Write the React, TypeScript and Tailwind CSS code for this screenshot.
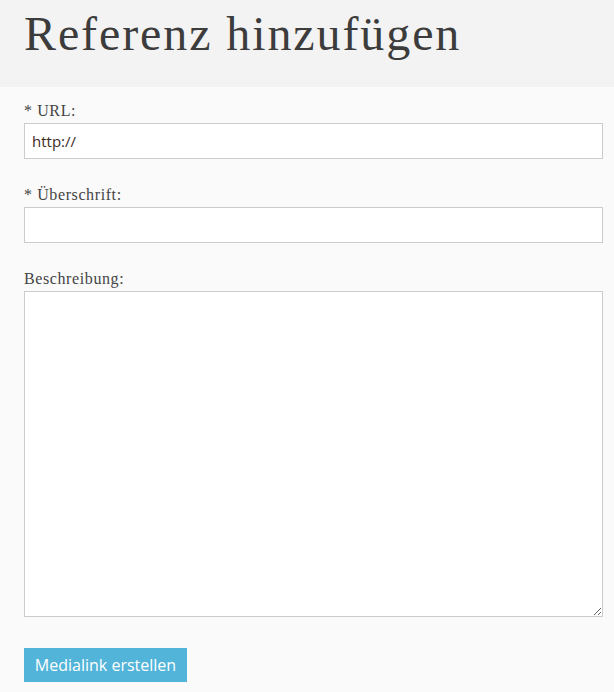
export default function App() {
  return (
    <div className="min-h-[692px] w-full bg-[#fafafa] text-[#444]">
      <div className="h-[87px] bg-[#f3f3f3] px-6 pt-[5px]">
        <h1 className="font-['Liberation_Serif',serif] text-[48px] leading-[58px] text-[#3c3c3c] tracking-[1.9px]">
          Referenz hinzufügen
        </h1>
      </div>
      <form className="flex flex-col px-6 pt-[13px]" onSubmit={(e) => e.preventDefault()}>
        <label className="mb-[1px] font-['Liberation_Serif',serif] text-[16px] leading-[22px] tracking-[0.6px] text-[#444]">
          * URL:
        </label>
        <input
          type="text"
          defaultValue="http://"
          className="h-[36px] w-[579px] border border-[#cccccc] bg-white px-[7px] font-['Open_Sans',sans-serif] text-[15px] text-[#3b2a1f] outline-none"
        />
        <label className="mt-[25px] mb-[1px] font-['Liberation_Serif',serif] text-[16px] leading-[22px] tracking-[0.6px] text-[#444]">
          * Überschrift:
        </label>
        <input
          type="text"
          className="h-[36px] w-[579px] border border-[#cccccc] bg-white px-[7px] font-['Open_Sans',sans-serif] text-[15px] outline-none"
        />
        <label className="mt-[25px] mb-[1px] font-['Liberation_Serif',serif] text-[16px] leading-[22px] tracking-[0.6px] text-[#444]">
          Beschreibung:
        </label>
        <textarea className="h-[326px] w-[579px] border border-[#cccccc] bg-white px-[7px] py-[6px] font-['Open_Sans',sans-serif] text-[15px] outline-none" />
        <div className="mt-[31px]">
          <button
            type="submit"
            className="h-[34px] w-[163px] bg-[#52b4d9] font-['Open_Sans',sans-serif] text-[16px] text-white"
          >
            Medialink erstellen
          </button>
        </div>
      </form>
    </div>
  );
}
